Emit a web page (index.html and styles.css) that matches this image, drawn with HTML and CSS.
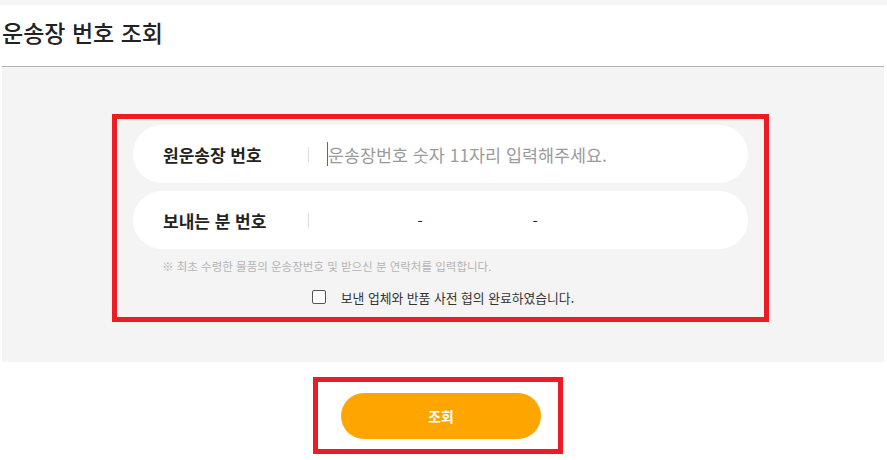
FILE: index.html
```html
<!DOCTYPE html>
<html lang="ko">
<head>
<meta charset="utf-8">
<title>운송장 번호 조회</title>
<link rel="stylesheet" href="styles.css">
</head>
<body>
<div class="topbar"></div>
<div class="page">
  <div class="header"><h1 class="title">운송장 번호 조회</h1></div>
  <div class="panel">
    <div class="form">
      <div class="rows">
        <div class="row">
          <span class="label">원운송장 번호</span>
          <span class="sep"></span>
          <input class="field" type="text" placeholder="운송장번호 숫자 11자리 입력해주세요.">
        </div>
        <div class="row">
          <span class="label">보내는 분 번호</span>
          <span class="sep"></span>
          <input class="phone" type="text">
          <span class="dash">-</span>
          <input class="phone" type="text">
          <span class="dash">-</span>
          <input class="phone" type="text">
        </div>
      </div>
      <p class="note">※ 최초 수령한 물품의 운송장번호 및 받으신 분 연락처를 입력합니다.</p>
      <label class="agree"><span class="box"></span><span class="agree-text">보낸 업체와 반품 사전 협의 완료하였습니다.</span></label>
    </div>
  </div>
  <div class="actions">
    <div class="btn-frame"><button class="btn" type="button">조회</button></div>
  </div>
</div>
</body>
</html>
```

FILE: styles.css
```css
* { box-sizing: border-box; }
html, body { margin: 0; padding: 0; background: #fff; }
body { font-family: "Noto Sans CJK KR", "Noto Sans", sans-serif; color: #222; }

.topbar { height: 5px; background: #f5f5f5; }
.page { padding: 0 3px 0 2px; }

.header {
  height: 62px;
  border-bottom: 1px solid #b4b4b4;
  display: flex;
  align-items: center;
  padding-bottom: 8px;
}
.title { margin: 0; font-size: 23px; font-weight: 500; color: #222; letter-spacing: 0; }

.panel {
  background: #f4f4f4;
  padding: 47px 0 40px 110px;
}
.form {
  width: 657px;
  border: 5px solid #ed1c24;
  padding: 6px 16px 11px;
}
.rows { display: flex; flex-direction: column; gap: 8px; }
.row {
  height: 58px;
  background: #fff;
  border-radius: 29px;
  display: flex;
  align-items: center;
  padding-left: 30px;
}
.label { width: 145px; font-size: 17px; font-weight: 700; color: #222; }
.sep { width: 1px; height: 15px; background: #ddd; }
.field {
  margin-left: 18px;
  height: 24px;
  width: 400px;
  border: 0;
  border-left: 1px solid #666;
  outline: none;
  padding: 0;
  background: transparent;
  font-family: inherit;
  font-size: 17.4px;
  color: #222;
}
.field::placeholder { color: #9b9b9b; }
.phone {
  width: 107px;
  height: 24px;
  border: 0;
  outline: none;
  padding: 0;
  background: transparent;
  font-family: inherit;
  font-size: 16px;
}
.dash { width: 8px; text-align: center; font-size: 15px; color: #222; }

.note {
  margin: 9px 0 0 29px;
  font-size: 11.5px;
  line-height: 16px;
  color: #b5b5b5;
}
.agree {
  margin-top: 14px;
  height: 18px;
  display: flex;
  align-items: center;
  justify-content: center;
  gap: 15px;
  padding-left: 5px;
}
.box {
  width: 14px;
  height: 14px;
  border: 1.5px solid #555;
  border-radius: 2px;
  background: #fff;
}
.agree-text { font-size: 12.8px; color: #333; }

.actions { padding: 15px 0 0 311px; }
.btn-frame {
  width: 250px;
  height: 77px;
  border: 5px solid #ed1c24;
  padding: 11px 17px 0 23px;
}
.btn {
  display: block;
  width: 200px;
  height: 46px;
  border: 0;
  border-radius: 23px;
  background: #ffa500;
  color: #fff;
  font-family: inherit;
  font-size: 14px;
  font-weight: 700;
}
```
